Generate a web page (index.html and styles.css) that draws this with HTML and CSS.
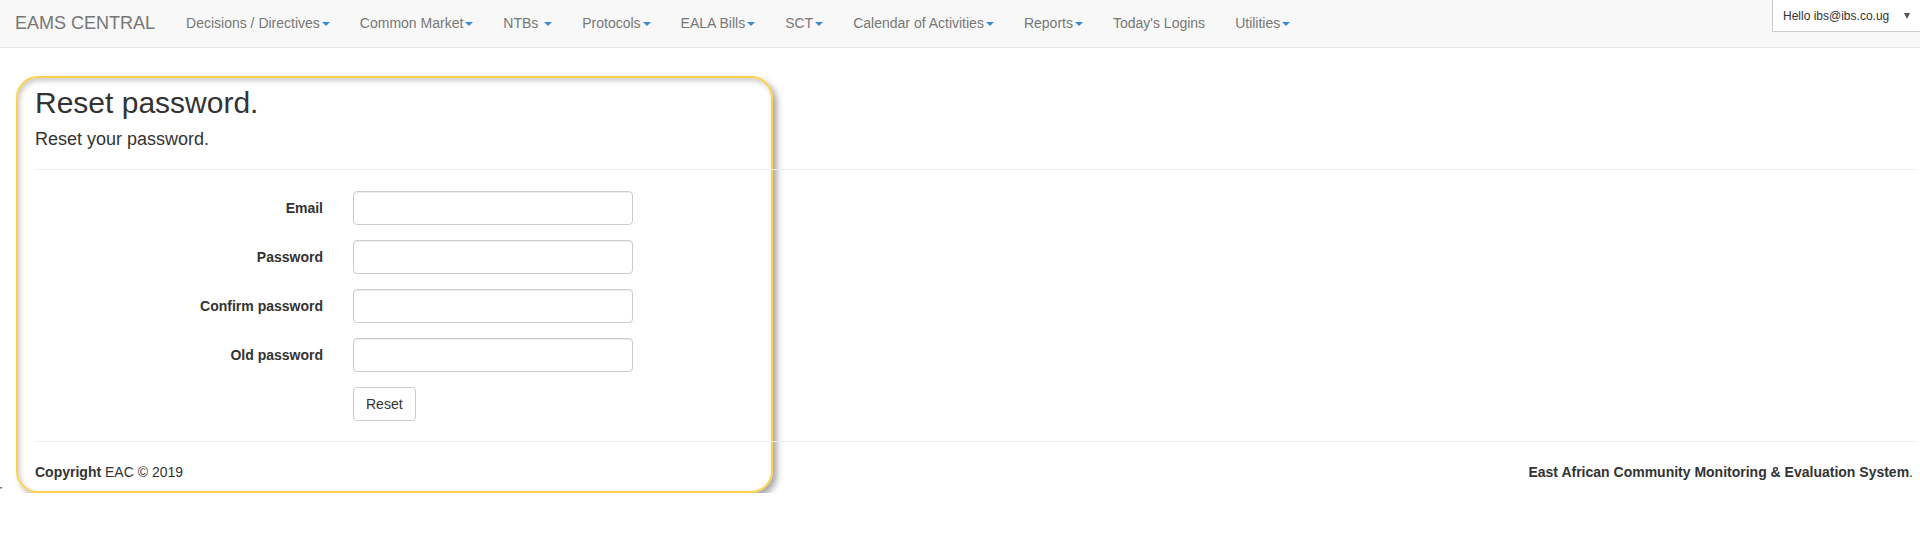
FILE: index.html
```html
<!DOCTYPE html>
<html lang="en">
<head>
<meta charset="utf-8">
<title>Reset password - EAMS CENTRAL</title>
<link rel="stylesheet" href="styles.css">
</head>
<body>
<nav class="navbar">
  <a class="brand" href="#">EAMS CENTRAL</a>
  <ul class="nav">
    <li><a href="#">Decisions / Directives<span class="caret"></span></a></li>
    <li><a href="#">Common Market<span class="caret"></span></a></li>
    <li><a href="#">NTBs <span class="caret"></span></a></li>
    <li><a href="#">Protocols<span class="caret"></span></a></li>
    <li><a href="#">EALA Bills<span class="caret"></span></a></li>
    <li><a href="#">SCT<span class="caret"></span></a></li>
    <li><a href="#">Calendar of Activities<span class="caret"></span></a></li>
    <li><a href="#">Reports<span class="caret"></span></a></li>
    <li><a href="#">Today's Logins</a></li>
    <li><a href="#">Utilities<span class="caret"></span></a></li>
  </ul>
  <div class="user">
    <span class="user-text">Hello ibs@ibs.co.ug</span>
    <span class="user-arrow"></span>
  </div>
</nav>

<div class="page">
  <span class="stray">;</span>
  <div class="frame">
    <div class="sheet">
      <h2 class="title">Reset password.</h2>
      <h4 class="subtitle">Reset your password.</h4>
      <hr class="rule">
      <form class="form">
        <div class="form-row">
          <label class="label" for="email">Email</label>
          <input class="input" id="email" type="email">
        </div>
        <div class="form-row">
          <label class="label" for="pw">Password</label>
          <input class="input" id="pw" type="password">
        </div>
        <div class="form-row">
          <label class="label" for="cpw">Confirm password</label>
          <input class="input" id="cpw" type="password">
        </div>
        <div class="form-row">
          <label class="label" for="opw">Old password</label>
          <input class="input" id="opw" type="password">
        </div>
        <div class="form-row">
          <span class="label"></span>
          <button class="btn" type="button">Reset</button>
        </div>
      </form>
      <hr class="rule footer-rule">
      <footer class="footer">
        <p><strong>Copyright</strong> EAC &copy; 2019</p>
        <p><strong>East African Community Monitoring &amp; Evaluation System</strong>.</p>
      </footer>
    </div>
  </div>
</div>
</body>
</html>
```

FILE: styles.css
```css
* { box-sizing: border-box; }

html, body {
  margin: 0;
  padding: 0;
  background: #fff;
  font-family: "Liberation Sans", Arial, Helvetica, sans-serif;
  font-size: 14px;
  line-height: 20px;
  color: #333;
  overflow: hidden;
}

/* ---------- navbar ---------- */
.navbar {
  display: flex;
  align-items: flex-start;
  height: 48px;
  background: #f8f8f8;
  border-bottom: 1px solid #e7e7e7;
}

.brand {
  display: block;
  padding: 13px 16px 0 15px;
  height: 47px;
  font-size: 18px;
  line-height: 20px;
  color: #777;
  text-decoration: none;
}

.nav {
  display: flex;
  list-style: none;
  margin: 0;
  padding: 0;
}

.nav a {
  display: block;
  padding: 13px 15px 14px;
  line-height: 20px;
  color: #777;
  text-decoration: none;
}

.caret {
  display: inline-block;
  width: 0;
  height: 0;
  margin-left: 2px;
  vertical-align: middle;
  border-top: 4px solid #3a8ad6;
  border-left: 4px solid transparent;
  border-right: 4px solid transparent;
}

.user {
  margin-left: auto;
  margin-top: -1px;
  width: 148px;
  height: 33px;
  display: flex;
  align-items: center;
  padding-left: 10px;
  background: #fff;
  border: 1px solid #ccc;
  border-right: none;
  font-size: 12px;
  color: #333;
}

.user-text { flex: 0 0 auto; }

.user-arrow {
  margin-left: 15px;
  width: 0;
  height: 0;
  border-top: 6px solid #555;
  border-left: 3.5px solid transparent;
  border-right: 3.5px solid transparent;
}

/* ---------- page ---------- */
.page {
  display: flex;
  align-items: flex-end;
}

.stray {
  width: 16px;
  flex: 0 0 16px;
  line-height: 20px;
  margin-bottom: -7px;
  text-indent: -1px;
}

.frame {
  width: 757px;
  margin-top: 28px;
  border: 2px solid #fdd14a;
  border-radius: 22px;
  box-shadow: 4px 4px 6px rgba(0, 0, 0, 0.35), inset 2px 3px 5px rgba(0, 0, 0, 0.2);
  padding: 8px 0 9px 17px;
}

.sheet {
  width: calc(100vw - 39px);
}

.title {
  margin: 0 0 10px;
  font-size: 30px;
  line-height: 33px;
  font-weight: 500;
}

.subtitle {
  margin: 0 0 20px;
  font-size: 18px;
  line-height: 20px;
  font-weight: 500;
}

.rule {
  margin: 0;
  border: 0;
  border-top: 1px solid #eee;
}

.form {
  display: flex;
  flex-direction: column;
  gap: 15px;
  padding-top: 21px;
  padding-bottom: 20px;
}

.form-row {
  display: grid;
  grid-template-columns: 288px 280px;
  column-gap: 30px;
  align-items: center;
}

.label {
  text-align: right;
  font-weight: 700;
  line-height: 20px;
}

.input {
  width: 280px;
  height: 34px;
  padding: 6px 12px;
  font: inherit;
  border: 1px solid #ccc;
  border-radius: 4px;
  box-shadow: inset 0 1px 1px rgba(0, 0, 0, 0.075);
  background: #fff;
}

.btn {
  justify-self: start;
  height: 34px;
  padding: 6px 12px;
  font: inherit;
  line-height: 20px;
  color: #333;
  background: #fff;
  border: 1px solid #ccc;
  border-radius: 4px;
}

.footer {
  display: flex;
  justify-content: space-between;
  padding-top: 20px;
  padding-right: 3px;
}

.footer p {
  margin: 0;
  line-height: 20px;
}
```
